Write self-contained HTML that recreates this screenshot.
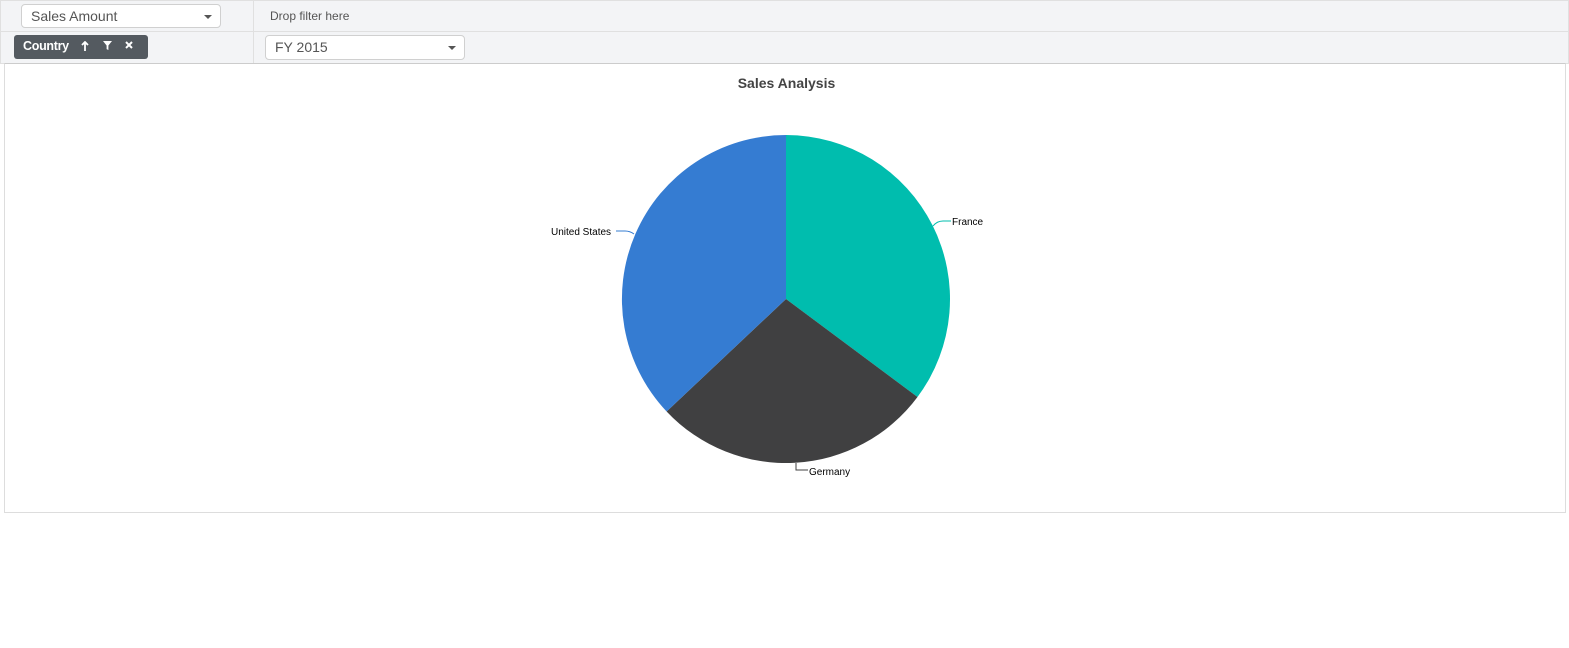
<!DOCTYPE html>
<html><head><style>
body{margin:0;width:1569px;height:648px;background:#fff;font-family:"Liberation Sans",Arial,sans-serif;position:relative;overflow:hidden}
.bar{position:absolute;left:0;width:1567px;background:#f3f4f6;border:1px solid #e0e0e0}
.dd{position:absolute;background:#fff;border:1px solid #d0d0d0;border-radius:4px;font-size:14px;color:#555;box-sizing:border-box;padding-left:9px;line-height:22px}
.car{position:absolute;right:8px;top:10px;width:0;height:0;border-left:4px solid transparent;border-right:4px solid transparent;border-top:4px solid #555}
</style></head><body>
<div class="bar" style="top:0;height:31px"></div>
<div class="bar" style="top:31px;height:31px"></div>
<div style="position:absolute;left:253px;top:0;width:1px;height:63px;background:#e0e0e0"></div>
<div class="dd" style="left:21px;top:4px;width:200px;height:24px">Sales Amount<div class="car"></div></div>
<div style="position:absolute;left:270px;top:9px;font-size:12px;color:#555">Drop filter here</div>
<div style="position:absolute;left:14px;top:35px;width:134px;height:24px;background:#545a60;border-radius:3px;color:#fff;font-size:12.5px;font-weight:bold;line-height:23px">
<span style="margin-left:9px;letter-spacing:-0.3px">Country</span>
<svg style="position:absolute;left:67px;top:6px" width="8" height="10" viewBox="0 0 8 10"><path d="M4 1V10M1 4L4 1L7 4" stroke="#fff" stroke-width="1.8" fill="none"/></svg>
<svg style="position:absolute;left:89px;top:6px" width="9" height="9" viewBox="0 0 10 10"><path d="M0 0H10L6 5V10L4 9V5Z" fill="#fff"/></svg>
<svg style="position:absolute;left:111px;top:6px" width="8" height="8" viewBox="0 0 8 8"><path d="M1 1L7 7M7 1L1 7" stroke="#fff" stroke-width="2"/></svg>
</div>
<div class="dd" style="left:265px;top:35px;width:200px;height:25px;line-height:23px">FY 2015<div class="car" style="top:10px"></div></div>
<div style="position:absolute;left:4px;top:63px;width:1560px;height:448px;border:1px solid #ddd;border-top:1px solid #ccc"></div>
<div style="position:absolute;left:0;width:1569px;top:75px;text-align:center;font-size:14px;font-weight:bold;color:#444;padding-left:2px">Sales Analysis</div>
<svg style="position:absolute;left:0;top:0" width="1569" height="648">
<path d="M786 299 L786 135 A164 164 0 0 1 917.5 397 Z" fill="#00bdae"/>
<path d="M786 299 L917.5 397 A164 164 0 0 1 666.6 411.5 Z" fill="#404041"/>
<path d="M786 299 L666.6 411.5 A164 164 0 0 1 786 135 Z" fill="#357cd2"/>
<path d="M933 226 Q937 221 943 221 H951" stroke="#00bdae" fill="none"/>
<path d="M634 234 Q630 231 625 231 H616" stroke="#357cd2" fill="none"/>
<path d="M796 463 V470 H808" stroke="#404041" fill="none"/>
<g font-family="Liberation Sans,sans-serif" font-size="10" fill="#000">
<text x="952" y="225">France</text>
<text x="551" y="235">United States</text>
<text x="809" y="475">Germany</text>
</g>
</svg>
</body></html>
